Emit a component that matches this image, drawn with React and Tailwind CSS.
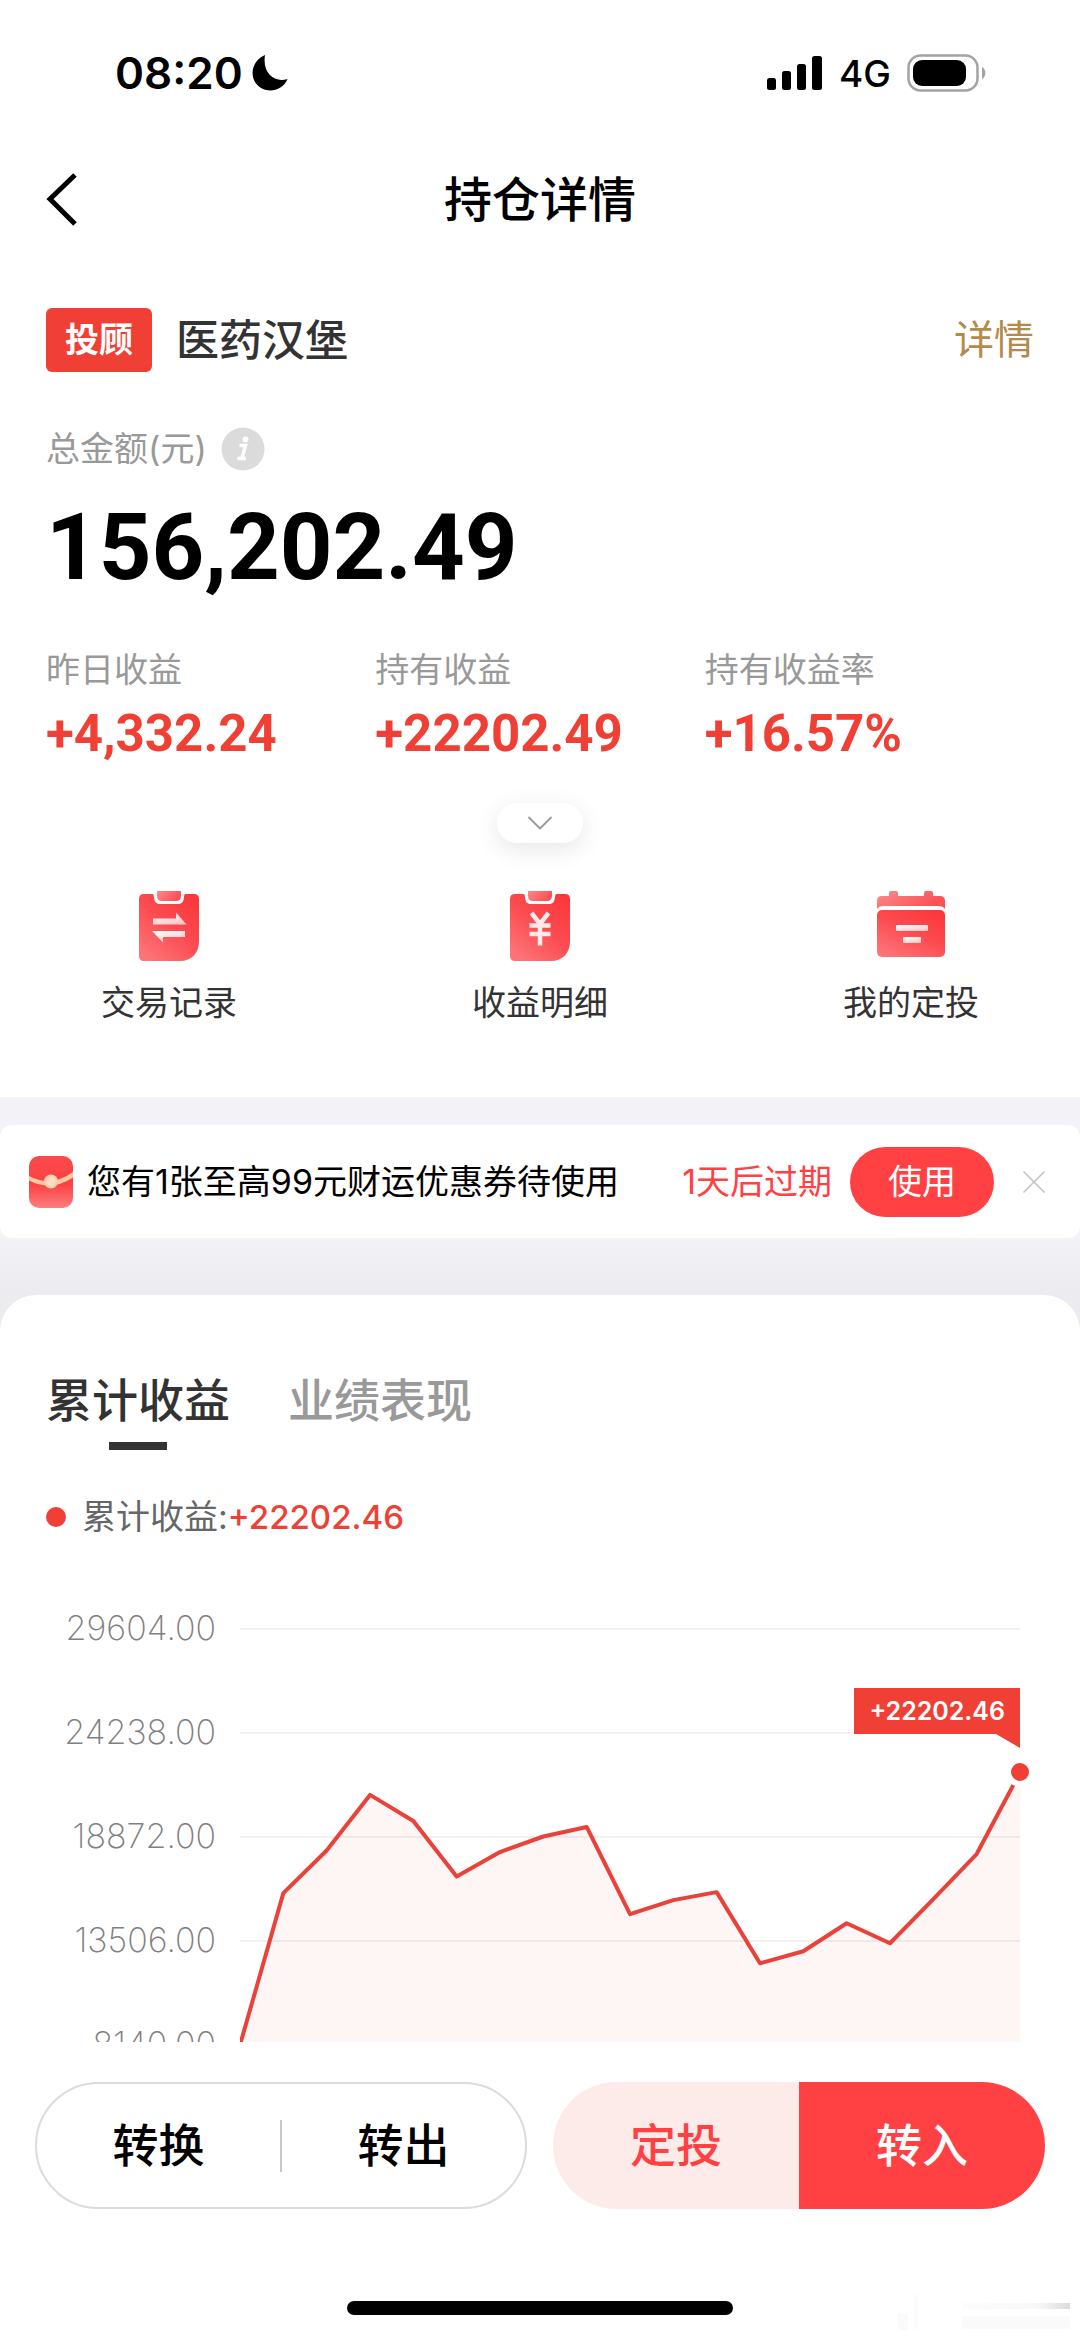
import { useState } from "react"
import { ChevronDown, X } from "lucide-react"

const stats = [
    { label: "昨日收益", value: "+4,332.24" },
    { label: "持有收益", value: "+22202.49" },
    { label: "持有收益率", value: "+16.57%" },
]

const axis = [29604, 24238, 18872, 13506, 8140]

const profits = [
    8140, 15976, 18174, 21044, 19700, 16829, 18096, 18898, 19389, 14890,
    15614, 16027, 12355, 12976, 14424, 13390, 15665, 17993, 22202.46,
]

const ROW = 104
const CHART_W = 780
const CHART_H = ROW * axis.length

const toY = (value) => ROW / 2 + ((axis[0] - value) / (axis[0] - axis[1])) * ROW

function StatusBar() {
    return (
        <div className="flex h-[146px] items-center justify-between pl-[115px] pr-[93px]">
            <div className="flex items-center gap-2 text-[44px] font-semibold leading-none">
                08:20
                <svg viewBox="0 0 38 38" className="size-[38px]">
                    <path d="M14 1C2 6-2 20 5 29.500C13 40 31 38.500 36.500 25C24 29 11 20 14 1Z" />
                </svg>
            </div>
            <div className="flex items-center">
                <svg viewBox="0 0 56 34" className="h-[34px] w-14">
                    <rect x="0" y="22" width="9" height="12" rx="2.500" />
                    <rect x="15" y="15" width="9" height="19" rx="2.500" />
                    <rect x="30" y="8" width="9" height="26" rx="2.500" />
                    <rect x="45" y="0" width="10" height="34" rx="2.500" />
                </svg>
                <span className="ml-4 text-[37px] font-medium leading-none">4G</span>
                <svg viewBox="0 0 80 38" className="ml-4 h-[38px] w-20">
                    <rect x="1.500" y="1.500" width="69" height="35" rx="12" fill="none" stroke="#a3a3a3" strokeWidth="2.500" />
                    <rect x="6" y="6" width="53" height="26" rx="9" />
                    <path d="M75 13C79.500 15 79.500 23 75 25Z" fill="#a3a3a3" />
                </svg>
            </div>
        </div>
    )
}

function RedGradients() {
    return (
        <svg className="absolute size-0" aria-hidden="true">
            <defs>
                <linearGradient id="body" x1="0.9" y1="0" x2="0.2" y2="1">
                    <stop offset="0" stopColor="#fb363a" />
                    <stop offset="0.5" stopColor="#fb4c51" />
                    <stop offset="1" stopColor="#fd7478" />
                </linearGradient>
                <linearGradient id="tab" x1="0" y1="0" x2="1" y2="0.4">
                    <stop offset="0" stopColor="#fb8a8b" />
                    <stop offset="1" stopColor="#fb5054" />
                </linearGradient>
                <linearGradient id="glyph" x1="0" y1="0" x2="0.6" y2="1">
                    <stop offset="0" stopColor="#ffffff" />
                    <stop offset="1" stopColor="#fdc9ca" />
                </linearGradient>
            </defs>
        </svg>
    )
}

function Clipboard({ children }) {
    return (
        <svg viewBox="0 0 62 72" className="h-[72px] w-[62px]">
            <path
                d="M6 4H14.500C15.500 4 15.700 5 16 7C16.600 12 18 14 22 14H40C44 14 45.400 12 46 7C46.300 5 46.500 4 47.500 4H56Q61 4 61 9V51C61 63 54 71 42 71H6Q1 71 1 66V9Q1 4 6 4Z"
                fill="url(#body)"
            />
            <path d="M19 1H43V6Q43 11 38 11H24Q19 11 19 6Z" fill="url(#tab)" />
            {children}
        </svg>
    )
}

function RecordIcon() {
    return (
        <Clipboard>
            <path d="M15 28.500H38V22.500L48.500 34.500H15Z" fill="url(#glyph)" />
            <path d="M14 41H47V47H25V52.500Z" fill="url(#glyph)" />
        </Clipboard>
    )
}

function ProfitIcon() {
    return (
        <Clipboard>
            <path
                d="M22.500 23L31 34L39.500 23M20.500 35.500H41.500M20.500 44H41.500M31 34V55.500"
                fill="none"
                stroke="#ffe9e9"
                strokeWidth="4.500"
            />
        </Clipboard>
    )
}

function PlanIcon() {
    return (
        <svg viewBox="0 0 70 72" className="h-[72px] w-[70px]">
            <path d="M1 19V11Q1 6 6 6H13V3Q13 1 15 1H20Q22 1 22 3V6H48V3Q48 1 50 1H55Q57 1 57 3V6H64Q69 6 69 11V19Q67 16 62 16H8Q3 16 1 19Z" fill="url(#tab)" />
            <rect x="1" y="20" width="68" height="47" rx="5" fill="url(#body)" />
            <rect x="20" y="35" width="32" height="6" rx="1" fill="url(#glyph)" />
            <rect x="27" y="47" width="18" height="6" rx="1" fill="url(#glyph)" />
        </svg>
    )
}

function EnvelopeIcon() {
    return (
        <svg viewBox="0 0 46 54" className="h-[54px] w-[46px] shrink-0">
            <defs>
                <linearGradient id="env" x1="0" y1="0" x2="0" y2="1">
                    <stop offset="0" stopColor="#fb4a4c" />
                    <stop offset="0.55" stopColor="#fc4143" />
                    <stop offset="1" stopColor="#fd7f80" />
                </linearGradient>
            </defs>
            <rect x="1" y="1" width="44" height="52" rx="10" fill="url(#env)" />
            <path d="M1 21Q23 33 45 17V22.500Q23 37 1 25.500Z" fill="#fdc9a4" />
            <circle cx="23" cy="26.500" r="7" fill="#fbcfae" />
            <circle cx="23" cy="26.500" r="4.500" fill="#fddcc4" />
        </svg>
    )
}

const actions = [
    { label: "交易记录", Icon: RecordIcon },
    { label: "收益明细", Icon: ProfitIcon },
    { label: "我的定投", Icon: PlanIcon },
]

function ProfitChart() {
    const step = CHART_W / (profits.length - 1)
    const line = profits.map((value, i) => `${i * step},${toY(value)}`).join(" ")
    const lastY = toY(profits[profits.length - 1])

    return (
        <div className="mt-9 flex gap-6 pr-[60px]">
            <div className="w-[216px] text-right text-[34px] font-extralight text-[#808080]">
                {axis.map((value) => (
                    <div key={value} className="h-[104px] leading-[102px]">{value.toFixed(2)}</div>
                ))}
            </div>
            <div className="relative min-w-0 flex-1">
                <svg viewBox={`0 0 ${CHART_W} ${CHART_H}`} preserveAspectRatio="none" className="block h-[520px] w-full">
                    {axis.map((value) => (
                        <line key={value} x1="0" x2={CHART_W} y1={toY(value)} y2={toY(value)} stroke="#f1f1f1" strokeWidth="2" />
                    ))}
                    <polygon points={`0,${CHART_H} ${line} ${CHART_W},${CHART_H}`} fill="#ee4035" fillOpacity="0.05" />
                    <polyline points={line} fill="none" stroke="#e9423a" strokeWidth="4" strokeLinejoin="round" />
                </svg>
                {/* Latest point and its flag */}
                <div
                    className="absolute right-0 size-[30px] -translate-y-1/2 translate-x-1/2 rounded-full border-[6px] border-white bg-[#f04035]"
                    style={{ top: lastY }}
                />
                <div className="absolute right-0 flex -translate-y-full flex-col items-end pb-6" style={{ top: lastY }}>
                    <span className="bg-[#f04035] px-[15px] text-[25px] font-semibold leading-[46px] text-white">+22202.46</span>
                    <svg viewBox="0 0 24 14" className="h-[14px] w-6">
                        <path d="M0 0H24V14Z" fill="#f04035" />
                    </svg>
                </div>
            </div>
        </div>
    )
}

export default function App() {
    const [tab, setTab] = useState("profit")
    const [showCoupon, setShowCoupon] = useState(true)

    return (
        <div className="flex h-screen flex-col overflow-hidden bg-white font-['Inter','Noto_Sans_CJK_SC',sans-serif] text-black">
            <RedGradients />
            <StatusBar />

            <header className="grid h-[108px] grid-cols-[1fr_auto_1fr] items-center px-[46px]">
                <button type="button" aria-label="返回" className="w-8">
                    <svg viewBox="0 0 32 54" className="h-[54px] w-8">
                        <path d="M29 2L4 26L29 51" fill="none" stroke="black" strokeWidth="5" />
                    </svg>
                </button>
                <h1 className="text-[48px] font-medium leading-none">持仓详情</h1>
            </header>

            <main className="min-h-0 flex-1 overflow-y-auto bg-[#f2f2f7] [scrollbar-width:none]">
                <section className="bg-white px-[46px] pb-[70px] pt-[54px]">
                    <div className="flex h-16 items-center">
                        <span className="rounded-md bg-[#f04035] px-[19px] text-[34px] font-bold leading-[64px] text-white">投顾</span>
                        <h2 className="ml-6 text-[43px] font-medium leading-none text-[#333]">医药汉堡</h2>
                        <a href="#detail" className="ml-auto text-[40px] leading-none text-[#b38a4b]">详情</a>
                    </div>

                    <div className="mt-[55px] flex h-11 items-center gap-[14px] text-[34px] leading-none text-[#999]">
                        总金额(元)
                        <button type="button" aria-label="金额说明">
                            <svg viewBox="0 0 44 44" className="size-11">
                                <circle cx="22" cy="22" r="21.500" fill="#dbdbdb" />
                                <circle cx="24.500" cy="12.500" r="3" fill="white" />
                                <path d="M18.500 18.500H24.500L21 31.500M16.500 31.500H25" fill="none" stroke="white" strokeWidth="3.500" />
                            </svg>
                        </button>
                    </div>
                    <div className="mt-8 font-['Roboto',sans-serif] text-[92px] font-bold leading-[90px]">156,202.49</div>

                    <dl className="mt-[53px] grid grid-cols-3">
                        {stats.map((item) => (
                            <div key={item.label}>
                                <dt className="text-[34px] leading-[48px] text-[#999]">{item.label}</dt>
                                <dd className="mt-4 font-['Roboto',sans-serif] text-[51px] font-bold leading-[48px] text-[#f04035]">
                                    {item.value}
                                </dd>
                            </div>
                        ))}
                    </dl>

                    <button
                        type="button"
                        aria-label="展开"
                        className="mx-auto mt-[45px] flex h-10 w-[86px] items-center justify-center rounded-full bg-white shadow-[0_6px_24px_rgba(0,0,0,0.1)]"
                    >
                        <ChevronDown className="size-11 text-[#999]" strokeWidth={1} />
                    </button>

                    <nav className="mt-[47px] flex justify-between px-[55px]">
                        {actions.map(({ label, Icon }) => (
                            <button key={label} type="button" className="flex flex-col items-center gap-[17px] text-[34px] leading-[48px] text-[#333]">
                                <Icon />
                                {label}
                            </button>
                        ))}
                    </nav>
                </section>

                {showCoupon && (
                    <section className="mt-7 flex h-[113px] items-center rounded-xl bg-white pl-7 pr-[26px] text-[34px]">
                        <EnvelopeIcon />
                        <p className="ml-[13px]">您有1张至高99元财运优惠券待使用</p>
                        <span className="ml-auto text-[#ff4144]">1天后过期</span>
                        <button type="button" className="ml-[18px] h-[70px] w-[144px] rounded-full bg-[#ff4144] text-white">使用</button>
                        <button type="button" aria-label="关闭" className="ml-5" onClick={() => setShowCoupon(false)}>
                            <X className="size-10 text-[#c4c4c4]" strokeWidth={1} />
                        </button>
                    </section>
                )}

                <div className="bg-linear-to-b from-[#f2f2f7] to-[#ecebf0] to-[57px] pt-[57px]">
                    <section className="rounded-t-[36px] bg-white pt-[73px]">
                        <div role="tablist" className="flex gap-[58px] px-[46px] text-[46px] font-medium leading-[64px]">
                            <button
                                type="button"
                                role="tab"
                                aria-selected={tab === "profit"}
                                onClick={() => setTab("profit")}
                                className={tab === "profit" ? "text-[#333]" : "text-[#999]"}
                            >
                                累计收益
                                <span className={`mx-auto mt-2.5 block h-2 w-[58px] ${tab === "profit" ? "bg-[#333]" : ""}`} />
                            </button>
                            <button
                                type="button"
                                role="tab"
                                aria-selected={tab === "performance"}
                                onClick={() => setTab("performance")}
                                className={tab === "performance" ? "text-[#333]" : "text-[#999]"}
                            >
                                业绩表现
                                <span className={`mx-auto mt-2.5 block h-2 w-[58px] ${tab === "performance" ? "bg-[#333]" : ""}`} />
                            </button>
                        </div>

                        <div className="mt-[43px] flex items-center px-[46px] text-[34px] leading-[48px] text-[#666]">
                            <span className="mr-4 size-5 rounded-full bg-[#f04035]" />
                            累计收益:
                            <span className="text-[33px] font-medium text-[#f04035]">+22202.46</span>
                        </div>

                        <ProfitChart />
                    </section>
                </div>
            </main>

            <footer className="relative bg-white px-[35px] pb-6 pt-10 text-[46px] font-medium">
                <div className="grid grid-cols-2 gap-[26px]">
                    <div className="flex h-[127px] items-center rounded-full border-2 border-[#dcdcdc]">
                        <button type="button" className="h-full flex-1">转换</button>
                        <span className="h-[52px] w-0.5 bg-[#c8c8c8]" />
                        <button type="button" className="h-full flex-1">转出</button>
                    </div>
                    <div className="flex h-[127px] overflow-hidden rounded-full">
                        <button type="button" className="flex-1 bg-[#fdebea] text-[#ff4144]">定投</button>
                        <button type="button" className="flex-1 bg-[#ff4144] text-white">转入</button>
                    </div>
                </div>
                <div className="mx-auto mt-[92px] h-[14px] w-[386px] rounded-full bg-black" />
                {/* Faded corner mark */}
                <svg viewBox="0 0 190 36" className="absolute bottom-2 right-2 h-9 w-[190px]" aria-hidden="true">
                    <defs>
                        <linearGradient id="fade" x1="0" y1="0" x2="1" y2="0">
                            <stop offset="0" stopColor="#000" stopOpacity="0.01" />
                            <stop offset="0.7" stopColor="#000" stopOpacity="0.03" />
                            <stop offset="1" stopColor="#000" stopOpacity="0.14" />
                        </linearGradient>
                    </defs>
                    <path d="M80 8H188V14H80Z" fill="url(#fade)" />
                    <path d="M32 0H36V34H32ZM16 18H26V35H16ZM80 21H188V34H80Z" fill="#000" fillOpacity="0.02" />
                </svg>
            </footer>
        </div>
    )
}
